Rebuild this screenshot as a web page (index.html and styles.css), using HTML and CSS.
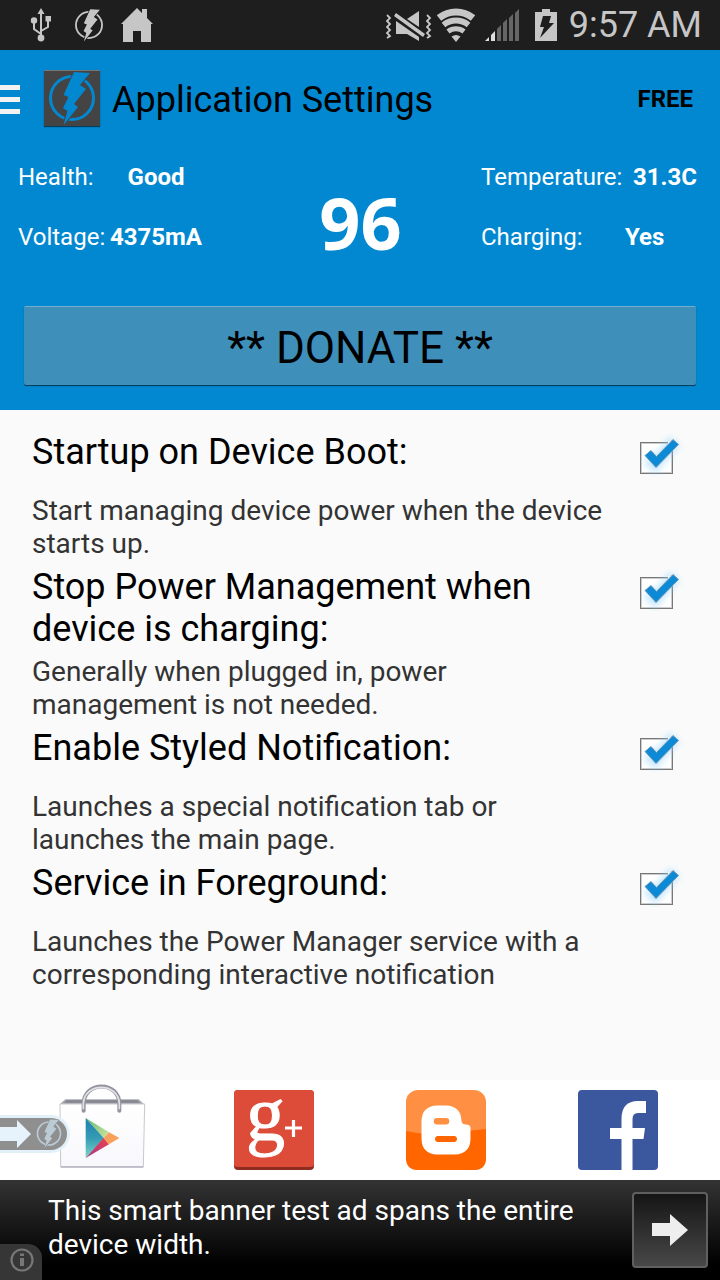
FILE: index.html
```html
<!DOCTYPE html>
<html lang="en">
<head>
<meta charset="utf-8">
<meta name="viewport" content="width=device-width, initial-scale=1">
<title>Application Settings</title>
<link rel="stylesheet" href="styles.css">
</head>
<body>
<svg class="defs" aria-hidden="true">
  <symbol id="bolt" viewBox="0 0 56 56">
    <circle cx="28" cy="28" r="21.500" fill="none" stroke="currentColor" stroke-width="3"/>
    <path class="bolt-gap" d="M30 2 46 3 36 15 42 19 30 34 34 37 19.500 55 23.500 41 19 38 24.500 27 19.500 25Z" stroke-width="2"/>
    <path d="M30 2 46 3 36 15 42 19 30 34 34 37 19.500 55 23.500 41 19 38 24.500 27 19.500 25Z" fill="currentColor"/>
  </symbol>
  <symbol id="tick" viewBox="0 0 80 60">
    <path d="M28 33l7 6 20-23" fill="none" stroke="#8fd3ff" stroke-width="13" opacity=".5" filter="url(#glow)"/>
    <path d="M48 17.500H53V26" fill="none" stroke="#eef7fd" stroke-width="3"/>
    <path d="M25 30.500 31 25.500 36.500 31.500 53 14.500 58.500 19.500 36 42.500Z" fill="#0c8ad6" stroke="#6f97b3" stroke-width="1"/>
  </symbol>
  <filter id="glow" x="-50%" y="-50%" width="200%" height="200%"><feGaussianBlur stdDeviation="3"/></filter>
</svg>

<div class="status">
  <div class="status-left">
    <svg width="22" height="34" viewBox="0 0 22 34" fill="none" stroke="#c6c6c6" stroke-width="2"><path d="M11 6V29M11 26 4 21V13M11 23 18 19V11"/><path d="M11 0 7.500 6H14.500Z" fill="#c6c6c6" stroke="none"/><circle cx="4" cy="12.500" r="3.200" fill="#c6c6c6" stroke="none"/><path d="M15.500 8H21V13.500H15.500Z" fill="#c6c6c6" stroke="none"/><circle cx="11" cy="30" r="3.400" fill="#c6c6c6" stroke="none"/></svg>
    <svg class="status-bolt" width="34" height="34"><use href="#bolt"/></svg>
    <svg width="34" height="34" viewBox="0 0 34 34"><path d="M17 0 22 5V1H27V10L33 16H31V34H21V23H13V34H3V16H1Z" fill="#c6c6c6"/></svg>
  </div>
  <div class="status-right">
    <svg class="vibrate" width="48" height="32" viewBox="0 0 48 32" fill="#c6c6c6"><path d="M2 6l3 3-3 3 3 3-3 3 3 3-3 3 3 3-3 2M42 6l3 3-3 3 3 3-3 3 3 3-3 3 3 3-3 2" fill="none" stroke="#c6c6c6" stroke-width="1.800"/><path d="M22 10 34 2V18Z"/><path d="M9 7 11 4 40 25 38 28Z"/><path d="M11 12 34 28V32L22 25H11Z"/></svg>
    <svg class="wifi" width="38" height="34" viewBox="0 0 38 34" fill="none" stroke="#c6c6c6"><path d="M2 10A27 27 0 0 1 36 10" stroke-width="7"/><path d="M6.500 17A20 20 0 0 1 31.500 17" stroke-width="6"/><path d="M11 23.500A13 13 0 0 1 27 23.500" stroke-width="5"/><path d="M14.500 28.500Q19 25.500 23.500 28.500L19 34Z" fill="#c6c6c6" stroke="none"/></svg>
    <svg class="signal" width="35" height="33" viewBox="0 0 35 33"><path d="M0 32 4 28V32ZM6 26 10 22V32H6Z" fill="#dedede"/><path d="M12 20 16 16V32H12ZM18 14 22 10V32H18ZM24 9 28 5V32H24ZM30 4 34 0V32H30Z" fill="#666"/></svg>
    <svg class="battery" width="22" height="32" viewBox="0 0 22 32"><path d="M7 0H15V3H22V32H0V3H7Z" fill="#c6c6c6"/><path d="M8 7H16L14 14H19L5 29 9 18H5Z" fill="#1e1e1e"/></svg>
    <time>9:57 AM</time>
  </div>
</div>

<header class="header">
  <div class="titlebar">
    <button class="menu" aria-label="Open menu"><i></i><i></i><i></i></button>
    <span class="app-icon"><svg width="56" height="56"><use href="#bolt"/></svg></span>
    <h1>Application Settings</h1>
    <span class="free">FREE</span>
  </div>
  <div class="stats">
    <dl class="stats-left">
      <dt>Health:</dt><dd>Good</dd>
      <dt>Voltage:</dt><dd>4375mA</dd>
    </dl>
    <strong class="level">96</strong>
    <dl class="stats-right">
      <dt>Temperature:</dt><dd>31.3C</dd>
      <dt>Charging:</dt><dd class="charging">Yes</dd>
    </dl>
  </div>
  <button class="donate">** DONATE **</button>
</header>

<main class="settings">
  <section class="setting">
    <label class="setting-head" for="boot"><span>Startup on Device Boot:</span>
      <span class="check"><input type="checkbox" id="boot" checked><svg width="80" height="60"><use href="#tick"/></svg></span></label>
    <p>Start managing device power when the device<br>starts up.</p>
  </section>
  <section class="setting">
    <label class="setting-head" for="stop"><span>Stop Power Management when<br>device is charging:</span>
      <span class="check"><input type="checkbox" id="stop" checked><svg width="80" height="60"><use href="#tick"/></svg></span></label>
    <p>Generally when plugged in, power<br>management is not needed.</p>
  </section>
  <section class="setting">
    <label class="setting-head" for="styled"><span>Enable Styled Notification:</span>
      <span class="check"><input type="checkbox" id="styled" checked><svg width="80" height="60"><use href="#tick"/></svg></span></label>
    <p>Launches a special notification tab or<br>launches the main page.</p>
  </section>
  <section class="setting">
    <label class="setting-head" for="foreground"><span>Service in Foreground:</span>
      <span class="check"><input type="checkbox" id="foreground" checked><svg width="80" height="60"><use href="#tick"/></svg></span></label>
    <p>Launches the Power Manager service with a<br>corresponding interactive notification</p>
  </section>
</main>

<nav class="links">
  <a href="#play" aria-label="Google Play">
    <svg width="88" height="88" viewBox="174 6 264 264">
      <defs>
        <linearGradient id="bag" x1="0" y1="0" x2="0" y2="1"><stop offset="0" stop-color="#fff"/><stop offset="1" stop-color="#f8f7fb"/></linearGradient>
        <linearGradient id="teal" x1="0" y1="0" x2="0" y2="1"><stop offset="0" stop-color="#1f7fb0"/><stop offset=".5" stop-color="#359bb5"/><stop offset="1" stop-color="#7fd6c4"/></linearGradient>
        <linearGradient id="red" x1="0" y1="1" x2="1" y2="0"><stop offset="0" stop-color="#a03a90"/><stop offset="1" stop-color="#f0404a"/></linearGradient>
        <linearGradient id="green" x1="0" y1="0" x2="1" y2="1"><stop offset="0" stop-color="#5fb87a"/><stop offset="1" stop-color="#d3e69c"/></linearGradient>
      </defs>
      <path d="M196 58H416L432 72H180Z" fill="#a9a9b2"/><path d="M200 61H412L420 68H192Z" fill="#85858f"/>
      <path d="M180 72H434L430 260H182Z" fill="url(#bag)" stroke="#c9c8d2" stroke-width="3"/>
      <path d="M182 261H430" stroke="#b5b4c0" stroke-width="4"/>
      <path d="M251 92V72C251 2 358 2 358 72V92" fill="none" stroke="#9494a0" stroke-width="12" stroke-linecap="round"/>
      <path d="M250 88V71C252 6 356 6 358 71V88" fill="none" stroke="#e1e1e8" stroke-width="5"/>
      <path d="M257 114 313 174 257 234Z" fill="url(#teal)"/>
      <path d="M257 114 327 157 311 174Z" fill="url(#green)"/>
      <path d="M257 234 311 174 327 193Z" fill="url(#red)"/>
      <path d="M327 157 358 174 327 193 311 174Z" fill="#f8a05c"/>
    </svg>
  </a>
  <a href="#plus" aria-label="Google Plus">
    <svg class="plus" width="80" height="80" viewBox="0 0 80 80"><rect width="80" height="80" rx="4" fill="#8f2c20"/><path d="M0 4Q0 0 4 0H76Q80 0 80 4V74Q80 77 76 77H4Q0 77 0 74Z" fill="#dd4b39"/><text class="logo-g" x="12" y="50">g</text><path d="M51 38H68M59.500 30V47" stroke="#fff" stroke-width="3.200"/></svg>
  </a>
  <a href="#blog" aria-label="Blogger">
    <svg width="80" height="80" viewBox="0 0 80 80"><rect width="80" height="80" rx="12" fill="#ff8f42"/><path d="M0 41Q20 46 40 43.500T80 39V68Q80 80 68 80H12Q0 80 0 68Z" fill="#f60"/><path fill-rule="evenodd" d="M31 15.500H40Q55 16 55.500 31Q56 34.500 60 34.500Q64.500 34.500 64.500 38V49Q64 64 49 64.500H31Q16 64 15.500 49V31Q16 16 31 15.500ZM31 28A3.200 3.200 0 0 0 31 34.500H40A3.200 3.200 0 0 0 40 28ZM31 46A3.200 3.200 0 0 0 31 52H49A3.200 3.200 0 0 0 49 46Z" fill="#fff"/></svg>
  </a>
  <a href="#facebook" aria-label="Facebook">
    <svg width="80" height="80" viewBox="0 0 80 80"><rect width="80" height="80" rx="4" fill="#3b589e"/><path d="M43.500 80V49H32V38H43.500V29Q43.500 11 60 11H68V23H60Q54.500 23 54.500 29V38H67L65.500 49H54.500V80Z" fill="#fff"/></svg>
  </a>
  <button class="handle" aria-label="Open quick panel">
    <svg width="70" height="38" viewBox="0 0 70 38"><path d="M0 0H51A19 19 0 0 1 51 38H0Z" fill="#e2f0fa"/><path d="M0 3H51A16 16 0 0 1 51 35H0Z" fill="#8c8c8c"/><path d="M0 12H17V5L31 19 17 33V26H0Z" fill="#e6f3fc"/><svg class="handle-bolt" x="34" y="3.500" width="30" height="30"><use href="#bolt"/></svg></svg>
  </button>
</nav>

<footer class="ad">
  <p>This smart banner test ad spans the entire<br>device width.</p>
  <button class="go" aria-label="Open ad"><svg width="36" height="32" viewBox="0 0 36 32"><path d="M0 9H18V0L36 16 18 32V22H0Z" fill="#eee"/></svg></button>
  <button class="info" aria-label="Ad information"><svg width="24" height="24" viewBox="0 0 24 24"><circle cx="12" cy="12" r="10.500" fill="none" stroke="#777" stroke-width="2.200"/><path d="M10 5.500H14V8H10ZM10 10H14V18H10Z" fill="#777"/></svg></button>
</footer>
</body>
</html>
```
FILE: styles.css
```css
* { box-sizing: border-box; }
body {
  margin: 0;
  min-height: 100vh;
  display: flex;
  flex-direction: column;
  background: #fafafa;
  color: #000;
  font-family: Roboto, "Noto Sans", sans-serif;
}
h1, p, dl, dd { margin: 0; }
button { padding: 0; border: 0; background: none; font: inherit; color: inherit; }
svg { display: block; flex: none; }
.defs { position: absolute; width: 0; height: 0; }

.bolt-gap { fill: var(--gap); stroke: var(--gap); }

.status {
  height: 50px;
  padding: 0 18px 0 30px;
  display: flex;
  justify-content: space-between;
  align-items: center;
  background: #1e1e1e;
  color: #c6c6c6;
}
.status-left, .status-right { display: flex; align-items: center; }
.status-bolt { --gap: #1e1e1e; margin: 0 14px 0 20px; color: #c6c6c6; }
.wifi { margin-left: 4px; }
.signal { margin-left: 10px; }
.battery { margin-left: 15px; }
.status time { margin-left: 12px; font-size: 36px; line-height: 50px; }

.header { background: #0288d1; display: flex; flex-direction: column; }
.titlebar { height: 98px; padding-right: 27px; display: flex; align-items: center; }
.menu { width: 20px; display: flex; flex-direction: column; gap: 7px; }
.menu i { height: 5px; background: #f2f2f2; }
.app-icon {
  --gap: #444;
  margin: 0 12px 2px 24px;
  background: #444;
  color: #0288d1;
  box-shadow: 0 1px 1px #0008, inset 0 1px #777;
}
h1 { flex: 1; padding-top: 2px; font-size: 36px; line-height: 42px; font-weight: 400; }
.free { font-size: 24px; font-weight: 700; }

.stats {
  height: 158px;
  padding: 0 23px 0 18px;
  display: flex;
  justify-content: space-between;
  align-items: flex-start;
  color: #fff;
  font-size: 24px;
  line-height: 28px;
}
.stats dl { flex: none; display: grid; row-gap: 32px; padding-top: 15px; }
.stats dd { font-weight: 700; }
.stats-left { grid-template-columns: 92px 92px; }
.stats-left dd { text-align: center; }
.stats-right { grid-template-columns: 144px 72px; }
.stats-right dd { text-align: right; }
.stats-right .charging { text-align: left; }
.level { padding: 34px 0 0 38px; font: 700 72px/80px "Noto Sans", sans-serif; }

.donate {
  margin: 0 24px 25px;
  padding-top: 3px;
  height: 79px;
  background: #3f8fbb;
  border-top: 1px solid #78aecb;
  box-shadow: 0 1px 1px #0009;
  border-radius: 2px;
  font-size: 44px;
}

.settings { flex: 1; padding: 21px 20px 32px 32px; display: flex; flex-direction: column; gap: 6px; }
.setting { display: flex; flex-direction: column; gap: 5px; }
.setting-head {
  min-height: 58px;
  display: flex;
  justify-content: space-between;
  align-items: flex-start;
  font-size: 36px;
  line-height: 42px;
}
.setting p { color: #333; font-size: 28px; line-height: 33px; }
.check { display: grid; width: 80px; height: 52px; }
.check > * { grid-area: 1 / 1; }
.check input {
  appearance: none;
  margin: 11px 0 0 20px;
  width: 33px;
  height: 32px;
  border: 1px solid #777;
  box-shadow: inset 0 0 0 1px #ccc;
  background: #fff;
}
.check svg { pointer-events: none; z-index: 1; margin-top: -6px; }
.check input:not(:checked) + svg { visibility: hidden; }

.links {
  position: relative;
  height: 100px;
  padding: 0 16px 10px;
  display: grid;
  grid-template-columns: repeat(4, 1fr);
  align-items: end;
  justify-items: center;
  background: #fff;
}
.plus { overflow: visible; }
.logo-g { font: 78px "Liberation Serif", serif; fill: #fff; stroke: #fff; stroke-width: 1px; }
.handle { position: absolute; left: 0; top: 35px; opacity: .97; }
.handle-bolt { --gap: #8c8c8c; color: #b9cad5; }

.ad {
  position: relative;
  height: 100px;
  padding: 0 12px 0 48px;
  display: flex;
  align-items: center;
  justify-content: space-between;
  background: linear-gradient(#333, #000 85%);
  color: #fff;
  font-size: 28px;
  line-height: 34px;
}
.ad p { padding-bottom: 4px; }
.go {
  width: 76px;
  height: 76px;
  display: grid;
  place-items: center;
  border: 2px solid #606060;
  border-radius: 4px;
  background: linear-gradient(#151515, #484848);
}
.info {
  position: absolute;
  left: 0;
  bottom: 0;
  width: 42px;
  height: 36px;
  padding: 4px 0 0 10px;
  border-radius: 0 14px 0 0;
  background: #363636;
  display: flex;
}
```
